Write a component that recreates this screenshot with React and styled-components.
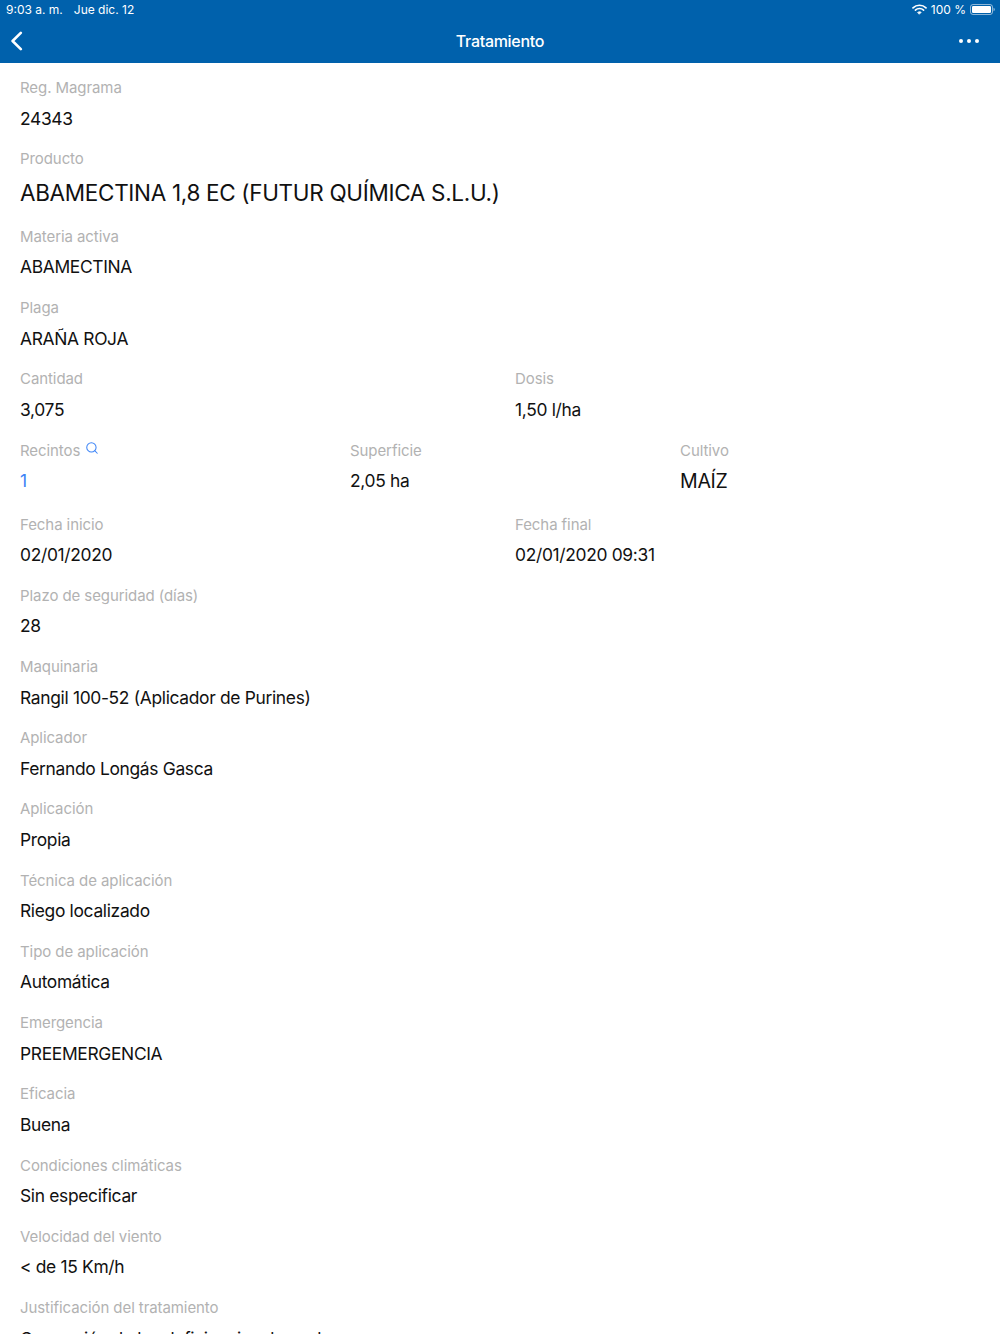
import React from "react";
import styled, { createGlobalStyle } from "styled-components";
import { Search } from "lucide-react";

const GlobalStyle = createGlobalStyle`
  html, body {
    margin: 0;
    padding: 0;
    background: #ffffff;
  }
  body {
    font-family: "Inter", "Liberation Sans", sans-serif;
  }
`;

const Page = styled.div`
  width: 1000px;
  height: 1334px;
  overflow: hidden;
  background: #ffffff;
`;

const Header = styled.header`
  background: #0061ac;
  height: 63px;
  display: flex;
  flex-direction: column;
  color: #ffffff;
`;

const StatusBar = styled.div`
  height: 19px;
  padding: 0 5px 0 6px;
  display: flex;
  align-items: center;
  justify-content: space-between;
  font-size: 12px;
`;

const StatusGroup = styled.div`
  display: flex;
  align-items: center;
  gap: ${(p) => p.$gap || 4}px;
`;

const NavBar = styled.div`
  flex: 1;
  display: grid;
  grid-template-columns: 1fr auto 1fr;
  align-items: center;
  padding: 0 10px 1px;
`;

const NavTitle = styled.div`
  font-size: 16px;
  font-weight: 500;
  letter-spacing: -0.3px;
`;

const NavSlot = styled.div`
  display: flex;
  align-items: center;
  justify-content: ${(p) => (p.$end ? "flex-end" : "flex-start")};
`;

const MoreDots = styled.div`
  display: flex;
  gap: 4px;
  margin-right: 11px;
`;

const Dot = styled.span`
  width: 4px;
  height: 4px;
  border-radius: 50%;
  background: #ffffff;
`;

const Content = styled.main`
  padding: 9px 20px 0;
`;

const Row = styled.div`
  display: grid;
  grid-template-columns: ${(p) => p.$columns || "1fr"};
`;

const Field = styled.div`
  padding-top: 6px;
  height: ${(p) => (p.$tall ? 77.6 : p.$mid ? 74 : 71.24)}px;
  box-sizing: border-box;
`;

const Label = styled.div`
  font-size: 15px;
  line-height: 20px;
  color: #b2b2b2;
  display: flex;
  letter-spacing: -0.08px;
`;

const sizes = {
  normal: { font: 17.4, line: 20, spacing: -0.32 },
  medium: { font: 19.6, line: 20, spacing: -0.32 },
  large: { font: 22.5, line: 26, spacing: -0.32 },
};

const Value = styled.div`
  margin-top: 10.5px;
  font-size: ${(p) => sizes[p.$size].font}px;
  line-height: ${(p) => sizes[p.$size].line}px;
  letter-spacing: ${(p) => sizes[p.$size].spacing}px;
  color: ${(p) => (p.$link ? "#3b82f6" : "#111111")};
  white-space: nowrap;
`;

const SearchIcon = styled(Search)`
  margin-left: 5px;
  color: #3f86f7;
`;

const Item = ({ label, value, size = "normal", link, tall, mid, icon }) => (
  <Field $tall={tall} $mid={mid}>
    <Label>
      {label}
      {icon && <SearchIcon size={14} strokeWidth={1.8} />}
    </Label>
    <Value $size={size} $link={link}>
      {value}
    </Value>
  </Field>
);

const TWO = "495px 1fr";
const THREE = "330px 330px 1fr";

export default function App() {
  return (
    <Page>
      <GlobalStyle />
      <Header>
        <StatusBar>
          <StatusGroup $gap={11}>
            <span>9:03 a. m.</span>
            <span>Jue dic. 12</span>
          </StatusGroup>
          <StatusGroup>
            <svg width="15" height="11" viewBox="0 0 15 11" fill="none" stroke="#fff" strokeLinecap="round">
              <path d="M1 3.8 C4.6 0.4 10.4 0.4 14 3.8" strokeWidth="1.7" />
              <path d="M3.4 6.1 C5.7 4 9.3 4 11.6 6.1" strokeWidth="1.6" />
              <path d="M5.8 8.3 C6.8 7.5 8.2 7.5 9.2 8.3 L7.5 10 Z" fill="#fff" strokeWidth="0.8" />
            </svg>
            <span>100 %</span>
            <svg width="25" height="11" viewBox="0 0 25 11">
              <rect x="0.5" y="0.5" width="22" height="10" rx="2.5" fill="none" stroke="#ffffff" strokeOpacity="0.55" />
              <rect x="2" y="2" width="19" height="7" rx="1.2" fill="#ffffff" />
              <path d="M23.5 3.7 C24.4 4 24.8 4.7 24.8 5.5 C24.8 6.3 24.4 7 23.5 7.3 Z" fill="#ffffff" fillOpacity="0.55" />
            </svg>
          </StatusGroup>
        </StatusBar>
        <NavBar>
          <NavSlot>
            <svg width="13" height="20" viewBox="0 0 13 20" fill="none" stroke="#fff" strokeWidth="2.6" strokeLinecap="round" strokeLinejoin="round">
              <path d="M10.8 1.8 L2.6 10 L10.8 18.2" />
            </svg>
          </NavSlot>
          <NavTitle>Tratamiento</NavTitle>
          <NavSlot $end>
            <MoreDots>
              <Dot />
              <Dot />
              <Dot />
            </MoreDots>
          </NavSlot>
        </NavBar>
      </Header>
      <Content>
        <Item label="Reg. Magrama" value="24343" />
        <Item label="Producto" value="ABAMECTINA 1,8 EC (FUTUR QUÍMICA S.L.U.)" size="large" tall />
        <Item label="Materia activa" value="ABAMECTINA" />
        <Item label="Plaga" value="ARAÑA ROJA" />
        <Row $columns={TWO}>
          <Item label="Cantidad" value="3,075" />
          <Item label="Dosis" value="1,50 l/ha" />
        </Row>
        <Row $columns={THREE}>
          <Item label="Recintos" value="1" link icon mid />
          <Item label="Superficie" value="2,05 ha" mid />
          <Item label="Cultivo" value="MAÍZ" size="medium" mid />
        </Row>
        <Row $columns={TWO}>
          <Item label="Fecha inicio" value="02/01/2020" />
          <Item label="Fecha final" value="02/01/2020 09:31" />
        </Row>
        <Item label="Plazo de seguridad (días)" value="28" />
        <Item label="Maquinaria" value="Rangil 100-52 (Aplicador de Purines)" />
        <Item label="Aplicador" value="Fernando Longás Gasca" />
        <Item label="Aplicación" value="Propia" />
        <Item label="Técnica de aplicación" value="Riego localizado" />
        <Item label="Tipo de aplicación" value="Automática" />
        <Item label="Emergencia" value="PREEMERGENCIA" />
        <Item label="Eficacia" value="Buena" />
        <Item label="Condiciones climáticas" value="Sin especificar" />
        <Item label="Velocidad del viento" value="< de 15 Km/h" />
        <Item label="Justificación del tratamiento" value="Corrección de las deficiencias de suelo" />
      </Content>
    </Page>
  );
}
